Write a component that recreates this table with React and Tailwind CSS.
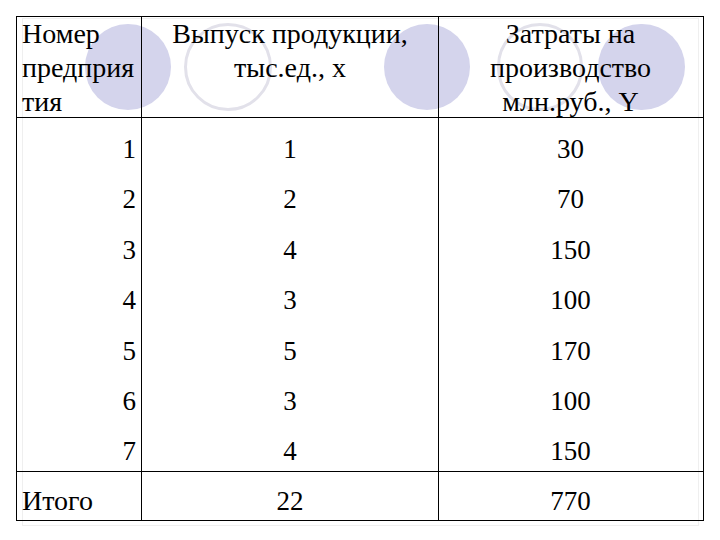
import React from 'react'

const rows = [
    [1, 1, 30],
    [2, 2, 70],
    [3, 4, 150],
    [4, 3, 100],
    [5, 5, 170],
    [6, 3, 100],
    [7, 4, 150],
];

const App = () => {
    return (
        <div className="relative w-[720px] h-[540px] bg-white overflow-hidden font-['Liberation_Serif'] text-black">
            {/* faint slide frame */}
            <div className="absolute left-[22px] top-[18px] w-[677px] h-[508px] border border-[#efefef]" />

            {/* decorative circles behind the header */}
            <div className="absolute left-[85px] top-[24px] w-[86px] h-[86px] rounded-full bg-[#d4d4ec]" />
            <div className="absolute left-[184px] top-[23px] w-[88px] h-[88px] rounded-full border-[3px] border-[#e2e1ea]" />
            <div className="absolute left-[384px] top-[24px] w-[86px] h-[86px] rounded-full bg-[#d4d4ec]" />
            <div className="absolute left-[497px] top-[23px] w-[86px] h-[88px] rounded-full border-[3px] border-[#e2e1ea]" />
            <div className="absolute left-[598px] top-[24px] w-[87px] h-[86px] rounded-full bg-[#d4d4ec]" />

            <div className="relative ml-[16px] mt-[16px] w-[688px] border-[1.5px] border-black">
                {/* header */}
                <div className="grid grid-cols-[124px_297px_264px] h-[101px] border-b-[1.5px] border-black text-[28px] leading-[34px]">
                    <div className="px-[5px]">
                        Номер<br />предприя<br />тия
                    </div>
                    <div className="border-l-[1.5px] border-black text-center">
                        Выпуск продукции,<br />тыс.ед., х
                    </div>
                    <div className="border-l-[1.5px] border-black text-center">
                        Затраты на<br />производство<br />млн.руб., Y
                    </div>
                </div>

                {/* data */}
                <div className="grid grid-cols-[124px_297px_264px] text-[27px] leading-[34px]">
                    {rows.map((r, i) => (
                        <React.Fragment key={i}>
                            <div className="h-[50.4px] pt-[14px] pr-[5px] text-right">{r[0]}</div>
                            <div className="h-[50.4px] pt-[14px] border-l-[1.5px] border-black text-center">{r[1]}</div>
                            <div className="h-[50.4px] pt-[14px] border-l-[1.5px] border-black text-center">{r[2]}</div>
                        </React.Fragment>
                    ))}
                </div>

                {/* total */}
                <div className="grid grid-cols-[124px_297px_264px] h-[49px] border-t-[1.5px] border-black text-[27px] leading-[34px]">
                    <div className="px-[5px] pt-[12px] text-[28px]">Итого</div>
                    <div className="border-l-[1.5px] border-black pt-[12px] text-center">22</div>
                    <div className="border-l-[1.5px] border-black pt-[12px] text-center">770</div>
                </div>
            </div>
        </div>
    )
}

export default App
